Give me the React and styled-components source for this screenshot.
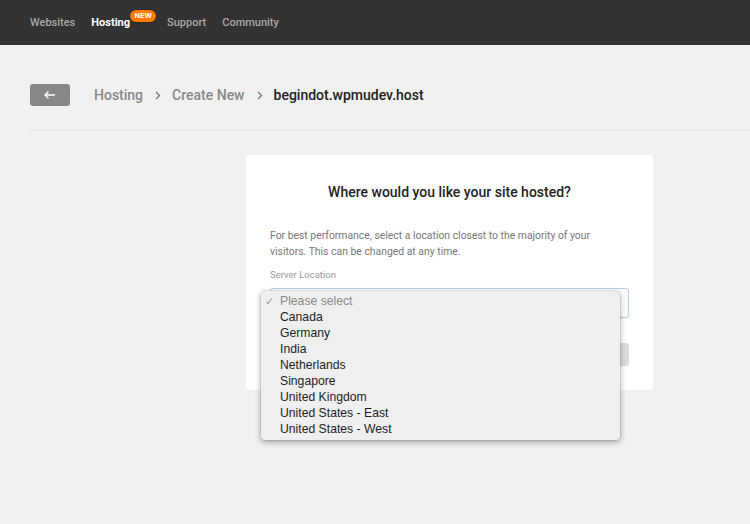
import React from "react";
import styled, { createGlobalStyle } from "styled-components";

const Global = createGlobalStyle`
  html, body { margin: 0; padding: 0; }
  body {
    background: #f1f1f1;
    font-family: Roboto, "Noto Sans", sans-serif;
    width: 750px;
    height: 524px;
    overflow: hidden;
  }
`;

const TopBar = styled.header`
  height: 45px;
  background: #333333;
  display: flex;
  align-items: center;
  padding-left: 30px;
  gap: 16px;
  box-sizing: border-box;
`;

const NavItem = styled.span`
  position: relative;
  font-size: 11px;
  line-height: 13px;
  color: ${(p) => (p.$active ? "#ffffff" : "#a8a8a8")};
  font-weight: ${(p) => (p.$active ? 700 : 500)};
  margin-right: ${(p) => (p.$badge ? "21px" : "0")};
`;

const Badge = styled.span`
  position: absolute;
  left: 100%;
  top: -6px;
  background: #ff7a00;
  color: #fff;
  font-size: 8px;
  font-weight: 700;
  line-height: 12px;
  padding: 0 4.5px;
  border-radius: 6px;
  box-shadow: 0 0 0 1px #2a2a2a;
`;

const Main = styled.main`
  padding-left: 30px;
`;

const CrumbRow = styled.div`
  display: flex;
  align-items: center;
  height: 22px;
  margin-top: 39px;
  padding-bottom: 24px;
  border-bottom: 1px solid #e4e4e4;
`;

const BackButton = styled.button`
  width: 40px;
  height: 22px;
  background: #888888;
  border: none;
  border-radius: 3px;
  display: flex;
  align-items: center;
  justify-content: center;
  padding: 0;
  margin-right: 24px;
`;

const Crumbs = styled.nav`
  display: flex;
  align-items: center;
  font-size: 14px;
  font-weight: 500;
  color: #888;
`;

const Crumb = styled.span`
  color: ${(p) => (p.$current ? "#222" : "#888")};
`;

const Sep = styled.span`
  margin: 0 11px 0 12px;
  display: flex;
  align-items: center;
`;

const Card = styled.section`
  margin: 24px 0 0 216px;
  width: 407px;
  background: #fff;
  border-radius: 3px;
  padding: 27px 24px 24px;
  box-sizing: border-box;
`;

const Title = styled.h2`
  margin: 0;
  font-size: 14px;
  line-height: 20px;
  font-weight: 500;
  color: #222;
  text-align: center;
`;

const Text = styled.p`
  margin: 26px 0 0;
  max-width: 335px;
  font-size: 10.4px;
  line-height: 16px;
  color: #777;
`;

const Label = styled.label`
  display: block;
  margin-top: 8px;
  font-size: 9.5px;
  line-height: 14px;
  color: #999;
`;

const SelectWrap = styled.div`
  position: relative;
  margin-top: 6px;
`;

const SelectBox = styled.div`
  height: 30px;
  border: 1px solid #b9cde6;
  border-radius: 3px;
  box-sizing: border-box;
  background: #fff;
`;

const Menu = styled.ul`
  position: absolute;
  left: -9px;
  top: 3px;
  width: 359px;
  margin: 0;
  padding: 2px 0 3px;
  list-style: none;
  background: #efefef;
  border-radius: 4px;
  box-shadow: 0 2px 6px rgba(0, 0, 0, 0.35), 0 0 0 0.5px rgba(0, 0, 0, 0.12);
  font-family: "Liberation Sans", Arial, sans-serif;
  font-size: 12.2px;
  z-index: 2;
`;

const Option = styled.li`
  position: relative;
  height: 16px;
  line-height: 16px;
  padding-left: 19px;
  color: ${(p) => (p.$placeholder ? "#8a8a8a" : "#1e1e1e")};
`;

const Check = styled.span`
  position: absolute;
  left: 4px;
  top: 0;
  color: #9a9a9a;
  font-size: 11px;
`;

const Footer = styled.div`
  display: flex;
  justify-content: flex-end;
  margin-top: 25px;
`;

const Continue = styled.button`
  width: 70px;
  height: 23px;
  border: none;
  border-radius: 3px;
  background: #dddddd;
`;

const options = [
  "Canada",
  "Germany",
  "India",
  "Netherlands",
  "Singapore",
  "United Kingdom",
  "United States - East",
  "United States - West",
];

const Chevron = () => (
  <svg width="6" height="9" viewBox="0 0 6 9" fill="none">
    <path d="M1 1 L4.5 4.5 L1 8" stroke="#777" strokeWidth="1.3" />
  </svg>
);

export default function App() {
  return (
    <>
      <Global />
      <TopBar>
        <NavItem>Websites</NavItem>
        <NavItem $active $badge>
          Hosting<Badge>NEW</Badge>
        </NavItem>
        <NavItem>Support</NavItem>
        <NavItem>Community</NavItem>
      </TopBar>
      <Main>
        <CrumbRow>
          <BackButton aria-label="Back">
            <svg width="12" height="8" viewBox="0 0 12 8" fill="none">
              <path d="M4 1 L1 4 L4 7" stroke="#fff" strokeWidth="1.4" strokeLinecap="round" strokeLinejoin="round" />
              <path d="M1.5 4 H10.5" stroke="#fff" strokeWidth="1.4" strokeLinecap="round" />
            </svg>
          </BackButton>
          <Crumbs>
            <Crumb>Hosting</Crumb>
            <Sep>
              <Chevron />
            </Sep>
            <Crumb>Create New</Crumb>
            <Sep>
              <Chevron />
            </Sep>
            <Crumb $current>begindot.wpmudev.host</Crumb>
          </Crumbs>
        </CrumbRow>
        <Card>
          <Title>Where would you like your site hosted?</Title>
          <Text>
            For best performance, select a location closest to the majority of your
            visitors. This can be changed at any time.
          </Text>
          <Label>Server Location</Label>
          <SelectWrap>
            <SelectBox />
            <Menu>
              <Option $placeholder>
                <Check>✓</Check>Please select
              </Option>
              {options.map((o) => (
                <Option key={o}>{o}</Option>
              ))}
            </Menu>
          </SelectWrap>
          <Footer>
            <Continue />
          </Footer>
        </Card>
      </Main>
    </>
  );
}
